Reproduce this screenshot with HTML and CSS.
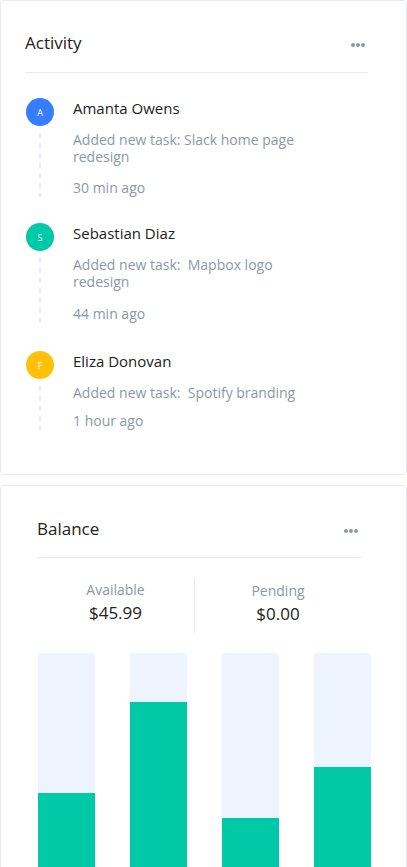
FILE: index.html
```html
<!DOCTYPE html>
<html lang="en">
<head>
<meta charset="utf-8">
<link rel="stylesheet" href="styles.css">
</head>
<body>
<section class="card activity">
  <header class="card-header">
    <h2 class="card-title">Activity</h2>
    <span class="more"><i></i><i></i><i></i></span>
  </header>
  <ul class="timeline">
    <li class="item first">
      <div class="rail"><span class="avatar blue">A</span><span class="dash"></span></div>
      <div class="content">
        <div class="name">Amanta Owens</div>
        <p class="desc">Added new task: Slack home page redesign</p>
        <div class="time">30 min ago</div>
      </div>
    </li>
    <li class="item second">
      <div class="rail"><span class="avatar green">S</span><span class="dash"></span></div>
      <div class="content">
        <div class="name">Sebastian Diaz</div>
        <p class="desc">Added new task:&nbsp; Mapbox logo redesign</p>
        <div class="time">44 min ago</div>
      </div>
    </li>
    <li class="item last">
      <div class="rail"><span class="avatar yellow">F</span><span class="dash"></span></div>
      <div class="content">
        <div class="name">Eliza Donovan</div>
        <p class="desc">Added new task:&nbsp; Spotify branding</p>
        <div class="time">1 hour ago</div>
      </div>
    </li>
  </ul>
</section>

<section class="card balance">
  <header class="card-header">
    <h2 class="card-title">Balance</h2>
    <span class="more"><i></i><i></i><i></i></span>
  </header>
  <div class="stats">
    <div class="stat">
      <div class="label">Available</div>
      <div class="value">$45.99</div>
    </div>
    <div class="stat pending">
      <div class="label">Pending</div>
      <div class="value">$0.00</div>
    </div>
  </div>
  <div class="bars">
    <div class="bar"><div class="fill" style="height:100px"></div></div>
    <div class="bar"><div class="fill" style="height:191px"></div></div>
    <div class="bar"><div class="fill" style="height:75px"></div></div>
    <div class="bar"><div class="fill" style="height:126px"></div></div>
  </div>
</section>
</body>
</html>
```

FILE: styles.css
```css
* { box-sizing: border-box; }
html, body { margin: 0; padding: 0; background: #fff; }
body {
  font-family: "Open Sans", "Noto Sans", sans-serif;
  color: #1e2022;
  width: 407px;
  overflow: hidden;
}
.card {
  border: 1px solid #e7eaf3;
  border-radius: 4px;
  background: #fff;
}
.activity {
  padding: 30px 38px 32px 24px;
}
.balance {
  margin-top: 10px;
  padding: 31px 45px 0 36px;
}
.card-header {
  display: flex;
  justify-content: space-between;
  align-items: center;
  border-bottom: 1px solid #e7eaf3;
  padding-bottom: 17px;
}
.balance .card-header { padding-bottom: 16px; }
.card-title {
  margin: 0;
  font-size: 17px;
  font-weight: 400;
  line-height: 24px;
}
.more {
  display: flex;
  gap: 1px;
  margin-right: 3px;
  margin-top: 3px;
}
.more i {
  width: 4px;
  height: 4px;
  border-radius: 50%;
  background: #8c98a4;
}
.timeline {
  list-style: none;
  margin: 25px 0 0;
  padding: 0;
}
.item {
  display: flex;
  gap: 19px;
  padding-bottom: 16px;
  margin-bottom: 12px;
}
.item.first { margin-bottom: 10px; }
.item.last { margin-bottom: 0; padding-bottom: 12px; }
.rail {
  width: 28px;
  display: flex;
  flex-direction: column;
  align-items: center;
  margin-left: 1px;
}
.avatar {
  width: 28px;
  height: 28px;
  border-radius: 50%;
  color: #fff;
  font-size: 9px;
  display: flex;
  align-items: center;
  justify-content: center;
  flex: none;
}
.blue { background: #377dff; }
.green { background: #00c9a7; }
.yellow { background: #ffc107; }
.dash {
  flex: 1;
  width: 2px;
  margin-top: 7px;
  background: repeating-linear-gradient(to bottom, #e7eaf3 0 5px, transparent 5px 10px);
}
.name {
  font-size: 15px;
  line-height: 20px;
}
.desc {
  margin: 13px 0 0;
  width: 240px;
  font-size: 14px;
  line-height: 17px;
  color: #8c98a4;
}
.time {
  margin-top: 14px;
  font-size: 14px;
  line-height: 18px;
  color: #8c98a4;
}
.second .time { margin-top: 15px; }
.last .time { margin-top: 11px; }
.stats {
  display: grid;
  grid-template-columns: 157px 1fr;
  margin-top: 20px;
  text-align: center;
}
.stat {
  padding: 3px 0 7px;
}
.stat.pending {
  border-left: 1px solid #e7eaf3;
  padding-top: 4px;
}
.label {
  font-size: 14px;
  line-height: 18px;
  color: #8c98a4;
}
.value {
  margin-top: 2px;
  font-size: 17px;
  line-height: 24px;
}
.bars {
  display: grid;
  grid-template-columns: repeat(4, 57px);
  column-gap: 35px;
  margin: 20px 0 0 1px;
}
.bar {
  height: 240px;
  background: #eef4fe;
  border-radius: 4px 4px 0 0;
  display: flex;
  flex-direction: column;
  justify-content: flex-end;
  overflow: hidden;
}
.fill {
  background: #00c9a7;
}
```
